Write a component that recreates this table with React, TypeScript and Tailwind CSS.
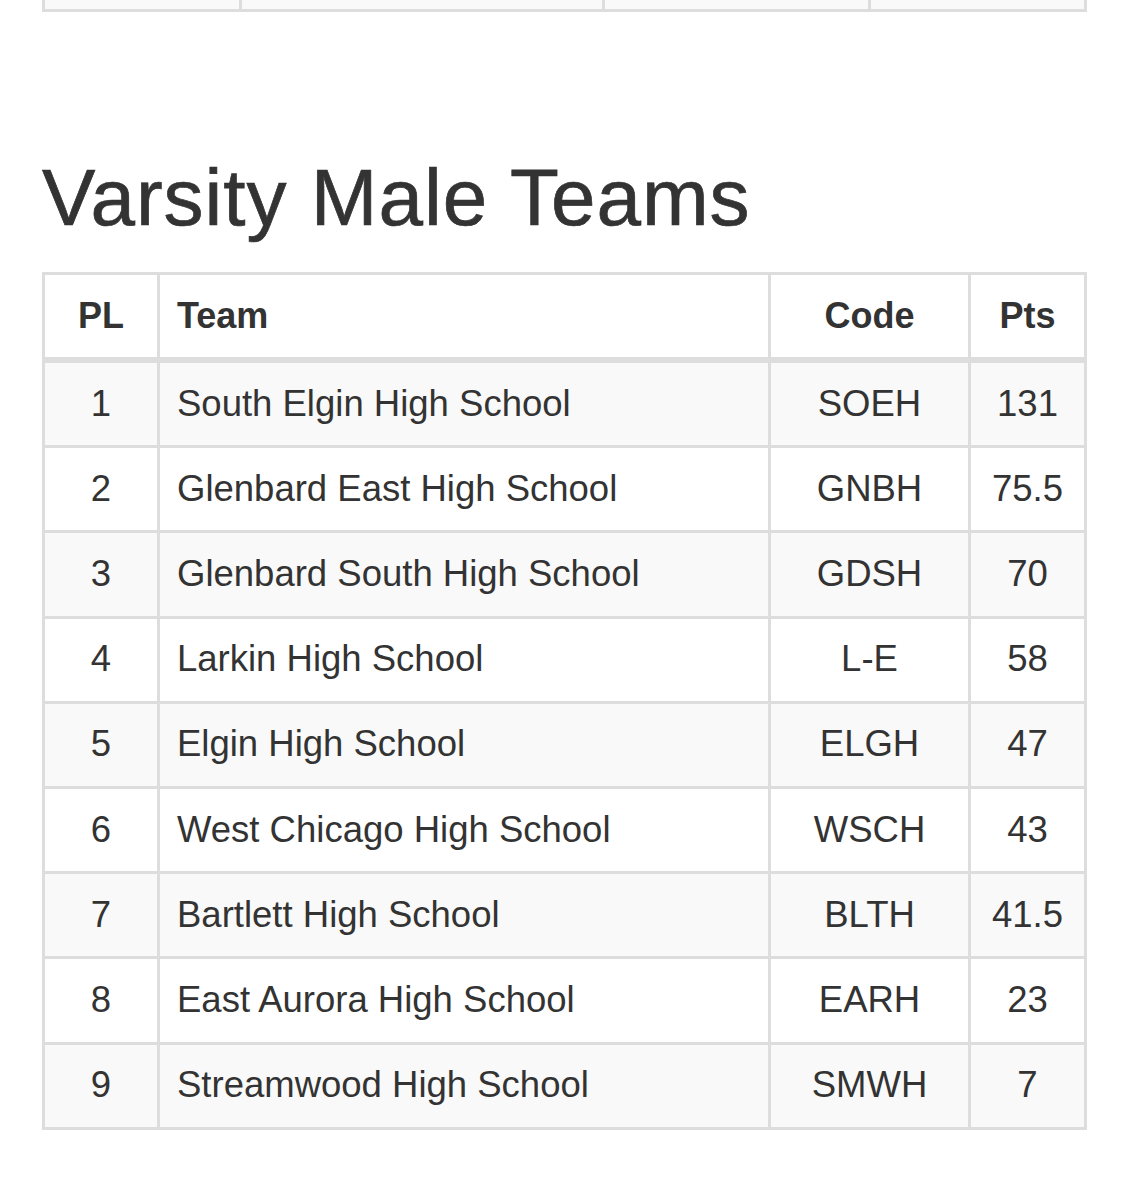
import React from "react";

type TeamRow = {
  pl: number;
  team: string;
  code: string;
  pts: string;
};

const teams: TeamRow[] = [
  { pl: 1, team: "South Elgin High School", code: "SOEH", pts: "131" },
  { pl: 2, team: "Glenbard East High School", code: "GNBH", pts: "75.5" },
  { pl: 3, team: "Glenbard South High School", code: "GDSH", pts: "70" },
  { pl: 4, team: "Larkin High School", code: "L-E", pts: "58" },
  { pl: 5, team: "Elgin High School", code: "ELGH", pts: "47" },
  { pl: 6, team: "West Chicago High School", code: "WSCH", pts: "43" },
  { pl: 7, team: "Bartlett High School", code: "BLTH", pts: "41.5" },
  { pl: 8, team: "East Aurora High School", code: "EARH", pts: "23" },
  { pl: 9, team: "Streamwood High School", code: "SMWH", pts: "7" },
];

// tail end of the previous results table, cut off at the top of the page
const PreviousTableTail = () => (
  <table className="w-[1045px] border-separate border-spacing-0 border-l-[3px] border-[#dddddd]">
    <tbody>
      <tr className="bg-[#f9f9f9]">
        <td className="h-[12px] w-[197px] border-r-[3px] border-b-[3px] border-[#dddddd] p-0" />
        <td className="h-[12px] w-[363px] border-r-[3px] border-b-[3px] border-[#dddddd] p-0" />
        <td className="h-[12px] w-[266px] border-r-[3px] border-b-[3px] border-[#dddddd] p-0" />
        <td className="h-[12px] w-[216px] border-r-[3px] border-b-[3px] border-[#dddddd] p-0" />
      </tr>
    </tbody>
  </table>
);

export default function App() {
  return (
    <div
      className="min-h-[1200px] bg-white pl-[42px] text-[#333333]"
      style={{ fontFamily: '"Liberation Sans", Arial, Helvetica, sans-serif' }}
    >
      <PreviousTableTail />

      <h1 className="mt-[142px] text-[80px] font-medium leading-[1.1] tracking-[1px] [-webkit-text-stroke:0.7px_#333333]">
        Varsity Male Teams
      </h1>

      <table className="mt-[30px] w-[1045px] table-fixed border-separate border-spacing-0 border-l-[3px] border-t-[3px] border-[#dddddd]">
        <colgroup>
          <col className="w-[115px]" />
          <col className="w-[611px]" />
          <col className="w-[200px]" />
          <col className="w-[116px]" />
        </colgroup>
        <thead>
          <tr className="bg-white">
            <th className="h-[88px] border-r-[3px] border-b-[6px] border-[#dddddd] p-0 text-center align-middle text-[36px] font-bold">
              PL
            </th>
            <th className="h-[88px] border-r-[3px] border-b-[6px] border-[#dddddd] py-0 pl-[17px] pr-0 text-left align-middle text-[36px] font-bold">
              Team
            </th>
            <th className="h-[88px] border-r-[3px] border-b-[6px] border-[#dddddd] p-0 text-center align-middle text-[36px] font-bold">
              Code
            </th>
            <th className="h-[88px] border-r-[3px] border-b-[6px] border-[#dddddd] p-0 text-center align-middle text-[36px] font-bold">
              Pts
            </th>
          </tr>
        </thead>
        <tbody className="text-[36.5px]">
          {teams.map((row) => (
            <tr key={row.pl} className="odd:bg-[#f9f9f9] even:bg-white">
              <td className="h-[85.2px] border-r-[3px] border-b-[3px] border-[#dddddd] p-0 text-center align-middle">
                {row.pl}
              </td>
              <td className="h-[85.2px] border-r-[3px] border-b-[3px] border-[#dddddd] py-0 pl-[17px] pr-0 text-left align-middle whitespace-nowrap">
                {row.team}
              </td>
              <td className="h-[85.2px] border-r-[3px] border-b-[3px] border-[#dddddd] p-0 text-center align-middle">
                {row.code}
              </td>
              <td className="h-[85.2px] border-r-[3px] border-b-[3px] border-[#dddddd] p-0 text-center align-middle">
                {row.pts}
              </td>
            </tr>
          ))}
        </tbody>
      </table>
    </div>
  );
}
